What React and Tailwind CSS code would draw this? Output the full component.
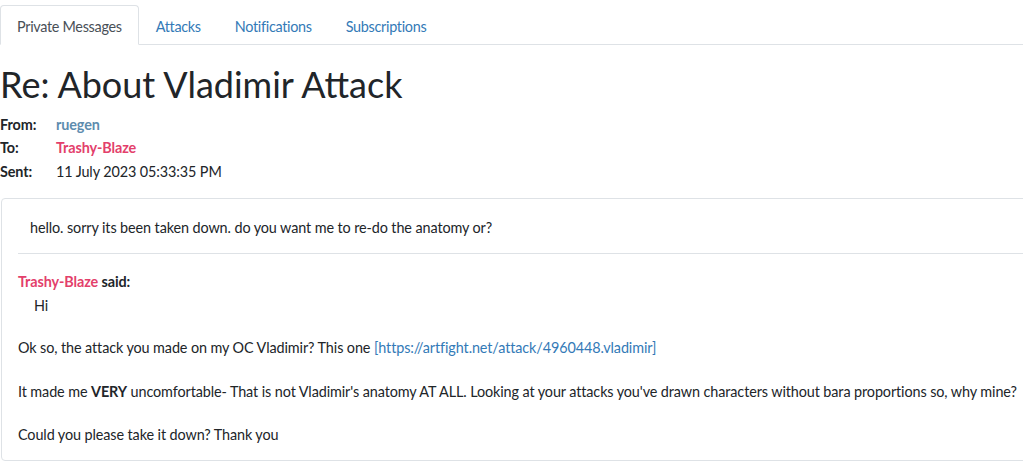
export default function App() {
  const tabs = ["Private Messages", "Attacks", "Notifications", "Subscriptions"];
  return (
    <div className="w-[1023px] h-[464px] overflow-hidden bg-white text-[#212529] font-['Lato',_sans-serif] text-[14.4px] leading-[21.6px] tracking-[-0.1px]">
      <ul className="mt-[5px] flex border-b border-[#dee2e6] tracking-[-0.3px]">
        {tabs.map((t, i) => (
          <li key={t} className="-mb-px">
            <a
              className={
                i === 0
                  ? "block rounded-t-[4px] border border-[#dee2e6] border-b-white bg-white px-4 pt-[10px] pb-[6px] text-[#495057]"
                  : "block border border-transparent px-4 pt-[10px] pb-[6px] text-[#337ab7]"
              }
            >
              {t}
            </a>
          </li>
        ))}
      </ul>

      <h1 className="mt-[18px] mb-[7px] text-[36px] leading-[43.2px] font-normal tracking-normal text-[#212529]">
        Re: About Vladimir Attack
      </h1>

      <div className="grid grid-cols-[56px_1fr] leading-[23.5px]">
        <div className="font-bold">From:</div>
        <div className="font-bold text-[#5d8cae]">ruegen</div>
        <div className="font-bold">To:</div>
        <div className="font-bold text-[#e3406b]">Trashy-Blaze</div>
        <div className="font-bold">Sent:</div>
        <div>11 July 2023 05:33:35 PM</div>
      </div>

      <div className="mt-[15px] ml-px w-[1060px] rounded-[4px] border border-[#dee2e6] px-4 pt-[18px] pb-[14px]">
        <div className="px-3">hello. sorry its been taken down. do you want me to re-do the anatomy or?</div>
        <hr className="mt-[14px] mb-[17px] border-[#dee2e6]" />
        <div>
          <div className="font-bold">
            <span className="text-[#e3406b]">Trashy-Blaze</span> said:
          </div>
          <div className="mt-[3px] pl-4">Hi</div>
          <div className="mt-[19.6px]">
            Ok so, the attack you made on my OC Vladimir? This one{" "}
            <a className="text-[#337ab7]">[https://artfight.net/attack/4960448.vladimir]</a>
          </div>
          <div className="mt-[22.6px]">
            It made me <b>VERY</b> uncomfortable- That is not Vladimir's anatomy AT ALL. Looking at your attacks you've drawn characters without bara proportions so, why mine?
          </div>
          <div className="mt-[21.6px]">Could you please take it down? Thank you</div>
        </div>
      </div>
    </div>
  );
}
